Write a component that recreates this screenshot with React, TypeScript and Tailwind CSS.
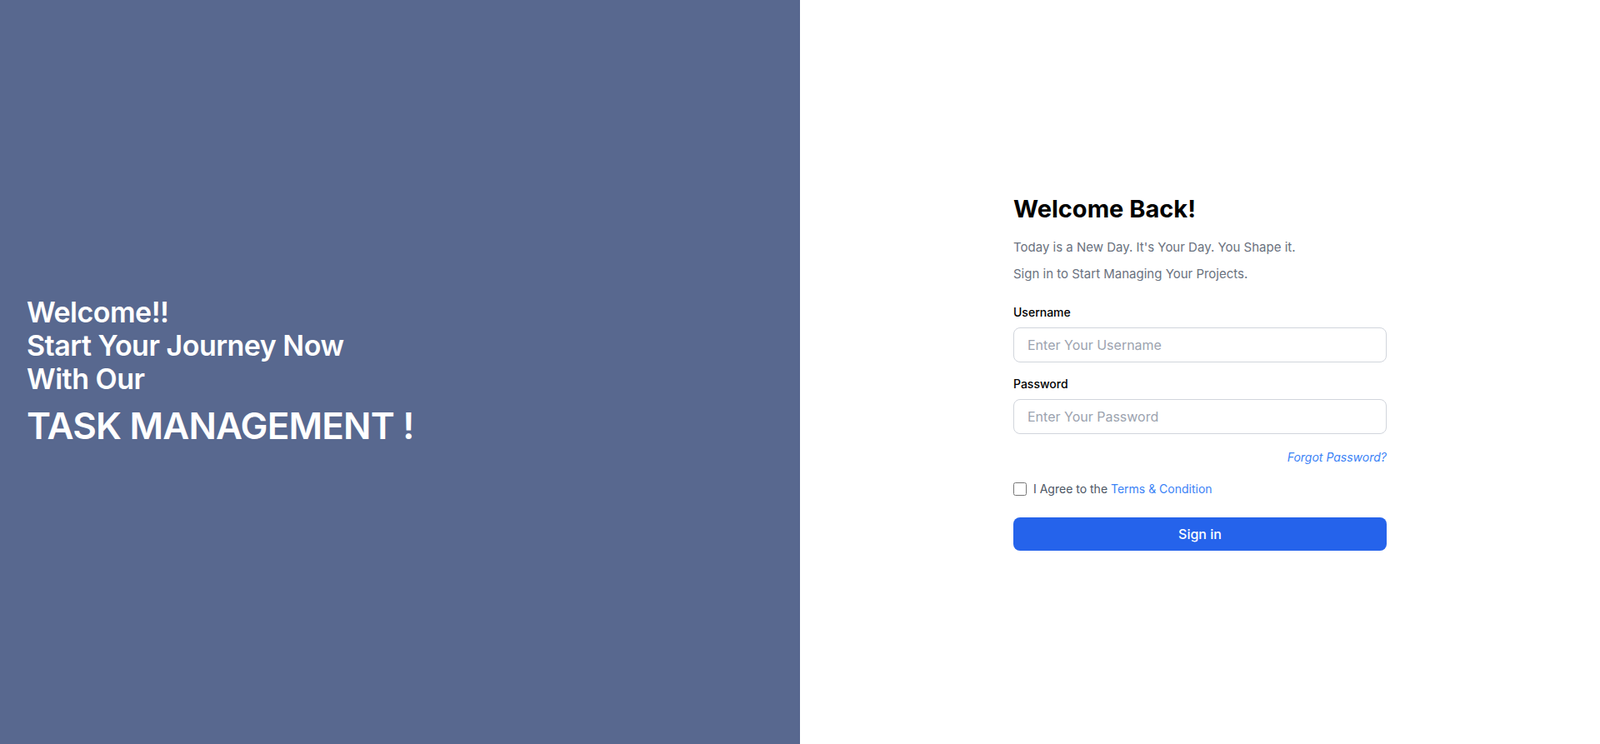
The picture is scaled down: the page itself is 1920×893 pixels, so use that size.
import React from "react";

export default function App() {
  return (
    <div
      className="flex w-full h-[893px] overflow-hidden"
      style={{ fontFamily: "Inter, 'Noto Sans', sans-serif" }}
    >
      <div className="w-1/2 h-full bg-[#58688f] flex flex-col justify-center px-8 text-white">
        <div className="text-[34px] leading-[40px] font-semibold tracking-[-0.5px]">
          <div>Welcome!!</div>
          <div>Start Your Journey Now</div>
          <div>With Our</div>
        </div>
        <div className="mt-[8px] text-[44px] leading-[56px] font-semibold tracking-[-0.8px]">
          TASK MANAGEMENT !
        </div>
      </div>
      <div className="w-1/2 h-full bg-white flex items-center justify-center">
        <div className="w-[448px]">
          <h1 className="text-[29px] leading-[36px] font-bold text-black">
            Welcome Back!
          </h1>
          <p className="mt-4 text-[15px] leading-6 text-[#6b7280]">
            Today is a New Day. It's Your Day. You Shape it.
          </p>
          <p className="mt-2 text-[15px] leading-6 text-[#6b7280]">
            Sign in to Start Managing Your Projects.
          </p>
          <label className="block mt-6 text-sm leading-5 font-medium text-black">
            Username
          </label>
          <input
            className="mt-2 block w-full h-[42px] rounded-lg border border-gray-300 px-4 text-base text-gray-900 placeholder:text-[#9ca3af] outline-none"
            placeholder="Enter Your Username"
          />
          <label className="block mt-4 text-sm leading-5 font-medium text-black">
            Password
          </label>
          <input
            type="password"
            className="mt-2 block w-full h-[42px] rounded-lg border border-gray-300 px-4 text-base text-gray-900 placeholder:text-[#9ca3af] outline-none"
            placeholder="Enter Your Password"
          />
          <div className="mt-[18px] flex justify-end">
            <a className="text-sm leading-5 italic text-[#3b82f6]">Forgot Password?</a>
          </div>
          <div className="mt-[18px] flex items-center gap-2">
            <input type="checkbox" className="w-4 h-4 rounded border border-gray-400" />
            <span className="text-sm leading-5 text-[#4b5563]">
              I Agree to the <span className="text-[#3b82f6]">Terms &amp; Condition</span>
            </span>
          </div>
          <button className="mt-6 w-full h-10 rounded-lg bg-[#2563eb] text-white text-base font-medium">
            Sign in
          </button>
        </div>
      </div>
    </div>
  );
}
